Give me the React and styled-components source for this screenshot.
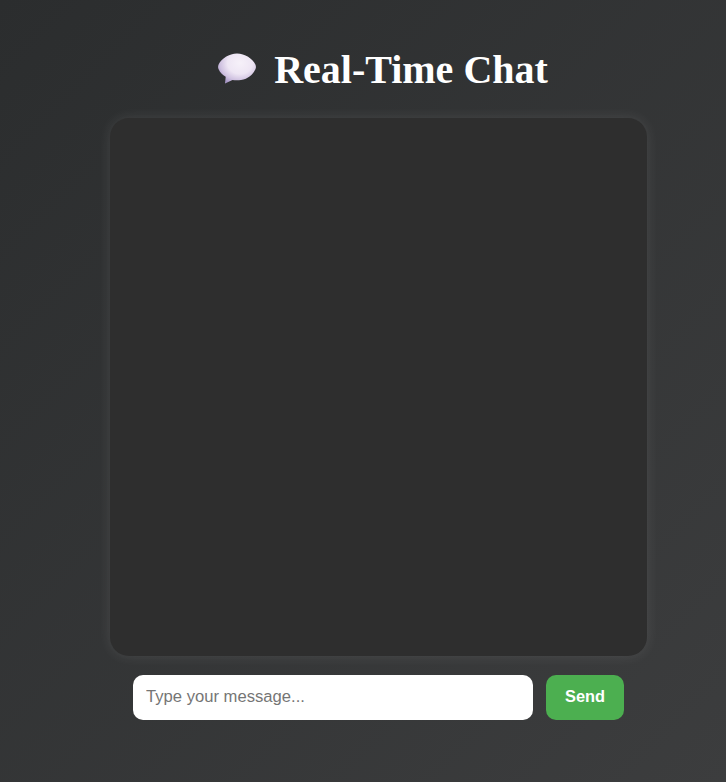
import React from 'react';
import styled, { createGlobalStyle } from 'styled-components';

const GlobalStyle = createGlobalStyle`
  * { box-sizing: border-box; }
  body { margin: 0; }
`;

const Page = styled.main`
  height: 782px;
  padding-left: 31px;
  display: flex;
  flex-direction: column;
  align-items: center;
  overflow: hidden;
  background: linear-gradient(135deg, #2b2d2e, #3c3d3e);
`;

const Title = styled.h1`
  display: flex;
  align-items: center;
  gap: 17px;
  height: 48px;
  margin: 46px 0 24px;
  padding-left: 8px;
  color: #fff;
  font: bold 40px/48px 'Liberation Serif', 'Times New Roman', serif;
`;

const BubbleIcon = styled.svg`
  width: 40px;
  height: 34px;
  margin-bottom: 2px;
  flex: none;
`;

const ChatBox = styled.section`
  width: 537px;
  height: 538px;
  flex: none;
  border-radius: 19px;
  background: #2e2e2e;
  box-shadow: 0 0 13px rgba(255, 255, 255, 0.1);
`;

const Composer = styled.form`
  display: flex;
  gap: 13px;
  margin-top: 19px;
`;

const MessageInput = styled.input`
  width: 400px;
  height: 45px;
  padding: 0 13px 2px;
  border: 0;
  border-radius: 10px;
  outline: none;
  background: #fff;
  color: #222;
  font: 16.64px 'Liberation Sans', Arial, sans-serif;

  &::placeholder { color: #757575; }
`;

const SendButton = styled.button`
  width: 78px;
  height: 45px;
  padding: 0 0 2px;
  border: 0;
  border-radius: 10px;
  background: #4caf50;
  color: #fff;
  font: bold 16.4px 'Liberation Sans', Arial, sans-serif;
  cursor: pointer;
`;

function SpeechBubble() {
  return (
    <BubbleIcon viewBox="0 0 40 34" aria-hidden="true">
      <defs>
        <radialGradient
          id="bubble"
          gradientUnits="userSpaceOnUse"
          cx="0"
          cy="0"
          r="1"
          gradientTransform="translate(23 11) scale(25 22)"
        >
          <stop offset="0" stopColor="#f6f1f9" />
          <stop offset="0.5" stopColor="#eee6f4" />
          <stop offset="0.8" stopColor="#cfc1e0" />
          <stop offset="1" stopColor="#a797c6" />
        </radialGradient>
      </defs>
      <path
        d="M20 1.500C12 1.500 4.500 6.500 1.600 12.500Q.6 14.800 1.500 17C3 20.500 5.500 23 8.700 24.800L8 31.500L15.500 28C18 28.400 21 28.500 24 28C31 27 36 22.500 38.500 17Q39.400 14.800 38.400 12.500C35.500 6.500 28 1.500 20 1.500Z"
        fill="url(#bubble)"
      />
    </BubbleIcon>
  );
}

export default function App() {
  return (
    <>
      <GlobalStyle />
      <Page>
        <Title><SpeechBubble />Real-Time Chat</Title>
        <ChatBox />
        <Composer onSubmit={(e) => e.preventDefault()}>
          <MessageInput placeholder="Type your message..." />
          <SendButton>Send</SendButton>
        </Composer>
      </Page>
    </>
  );
}
